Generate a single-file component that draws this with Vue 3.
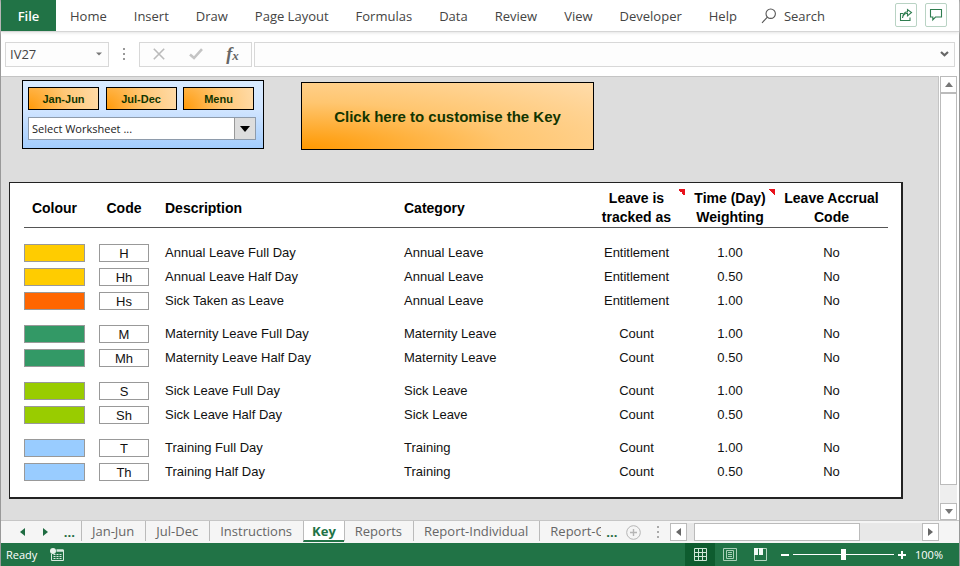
<script setup>
import { ref } from 'vue'

const ribbonTabs = ['Home', 'Insert', 'Draw', 'Page Layout', 'Formulas', 'Data', 'Review', 'View', 'Developer', 'Help']

const groups = [
  {
    name: 'annual',
    rows: [
      { swatch: 'gold', code: 'H', text: 'Annual Leave Full Day', category: 'Annual Leave', tracked: 'Entitlement', weight: '1.00' },
      { swatch: 'gold', code: 'Hh', text: 'Annual Leave Half Day', category: 'Annual Leave', tracked: 'Entitlement', weight: '0.50' },
      { swatch: 'orange', code: 'Hs', text: 'Sick Taken as Leave', category: 'Annual Leave', tracked: 'Entitlement', weight: '1.00' }
    ]
  },
  {
    name: 'maternity',
    rows: [
      { swatch: 'green', code: 'M', text: 'Maternity Leave Full Day', category: 'Maternity Leave', tracked: 'Count', weight: '1.00' },
      { swatch: 'green', code: 'Mh', text: 'Maternity Leave Half Day', category: 'Maternity Leave', tracked: 'Count', weight: '0.50' }
    ]
  },
  {
    name: 'sick',
    rows: [
      { swatch: 'lime', code: 'S', text: 'Sick Leave Full Day', category: 'Sick Leave', tracked: 'Count', weight: '1.00' },
      { swatch: 'lime', code: 'Sh', text: 'Sick Leave Half Day', category: 'Sick Leave', tracked: 'Count', weight: '0.50' }
    ]
  },
  {
    name: 'training',
    rows: [
      { swatch: 'blue', code: 'T', text: 'Training Full Day', category: 'Training', tracked: 'Count', weight: '1.00' },
      { swatch: 'blue', code: 'Th', text: 'Training Half Day', category: 'Training', tracked: 'Count', weight: '0.50' }
    ]
  }
]

const sheets = ['Jan-Jun', 'Jul-Dec', 'Instructions', 'Key', 'Reports', 'Report-Individual']
const activeSheet = ref('Key')
const cell = ref('IV27')
const formula = ref('')
const zoom = ref(50)
</script>

<template>
  <div class="window">
    <header class="ribbon">
      <button class="file" type="button">File</button>
      <nav class="ribbon-tabs">
        <button v-for="tab in ribbonTabs" :key="tab" type="button">{{ tab }}</button>
      </nav>
      <button class="search" type="button">
        <svg width="16" height="16" viewBox="0 0 16 16" fill="none" stroke="#555" stroke-width="1.1">
          <circle cx="9.7" cy="5.7" r="4.7" />
          <path d="M6.4 9.1 1 14.8" />
        </svg>
        Search
      </button>
      <div class="ribbon-actions">
        <button type="button" aria-label="Share">
          <svg width="14" height="14" viewBox="0 0 14 14" fill="none" stroke="#2f7d50" stroke-width="1.1">
            <path d="M4 5.500H1.500v7h9.500V9.500" />
            <path d="M3.500 10C4 7 5.500 5.500 8.500 5.300V7.800L12.500 4.500 8.500 1.500v2.200C5.500 4 3.700 6.500 3.500 10Z" />
          </svg>
        </button>
        <button type="button" aria-label="Comments">
          <svg width="14" height="14" viewBox="0 0 14 14" fill="none" stroke="#2f7d50" stroke-width="1.1">
            <path d="M1.500 1.500h11v7.500H6.500L3.800 11.800V9H1.500Z" />
          </svg>
        </button>
      </div>
    </header>

    <div class="formula-bar">
      <div class="name-box">
        <input v-model="cell" aria-label="Name box" />
        <button type="button" aria-label="Names">
          <svg width="6" height="4" viewBox="0 0 6 4"><path d="M0 .5h6L3 3.500Z" fill="#777" /></svg>
        </button>
      </div>
      <svg class="grip" width="4" height="12" viewBox="0 0 4 12" fill="#999">
        <rect x="1" y="0" width="2" height="2" /><rect x="1" y="5" width="2" height="2" /><rect x="1" y="10" width="2" height="2" />
      </svg>
      <div class="fx-box">
        <button type="button" aria-label="Cancel">
          <svg width="12" height="12" viewBox="0 0 12 12" fill="none" stroke="#bbb" stroke-width="1.600"><path d="M.8.8l10.400 10.400M11.200.8.8 11.200" /></svg>
        </button>
        <button type="button" aria-label="Enter">
          <svg width="14" height="12" viewBox="0 0 14 12" fill="none" stroke="#c4c4c4" stroke-width="2.600"><path d="M1 6.500 5 10 13 1.200" /></svg>
        </button>
        <button class="fx" type="button" aria-label="Insert function"><i>f</i><i class="fx-x">x</i></button>
      </div>
      <div class="formula">
        <input v-model="formula" aria-label="Formula" />
        <button type="button" aria-label="Expand formula bar">
          <svg width="9" height="6" viewBox="0 0 9 6" fill="none" stroke="#666" stroke-width="2.200"><path d="M1 1l3.500 3.300L8 1" /></svg>
        </button>
      </div>
    </div>

    <div class="workspace">
      <main class="sheet">
        <div class="toolbar">
          <section class="panel">
            <div class="panel-buttons">
              <button class="gold-button" type="button">Jan-Jun</button>
              <button class="gold-button" type="button">Jul-Dec</button>
              <button class="gold-button" type="button">Menu</button>
            </div>
            <div class="picker">
              <select aria-label="Worksheet">
                <option>Select Worksheet ...</option>
                <option v-for="name in sheets" :key="name">{{ name }}</option>
              </select>
              <span class="picker-arrow">
                <svg width="10" height="6" viewBox="0 0 10 6"><path d="M0 0h10L5 6Z" /></svg>
              </span>
            </div>
          </section>
          <button class="gold-button customise" type="button">Click here to customise the Key</button>
        </div>

        <div class="card">
          <table>
            <colgroup>
              <col class="col-colour" /><col class="col-code" /><col /><col class="col-category" />
              <col class="col-tracked" /><col class="col-time" /><col class="col-accrual" />
            </colgroup>
            <thead>
              <tr>
                <th class="colour">Colour</th>
                <th class="code">Code</th>
                <th class="left">Description</th>
                <th class="left">Category</th>
                <th class="noted">Leave is<br />tracked as</th>
                <th class="noted">Time (Day)<br />Weighting</th>
                <th>Leave Accrual<br />Code</th>
              </tr>
            </thead>
            <tbody v-for="group in groups" :key="group.name">
              <tr v-for="row in group.rows" :key="row.code">
                <td class="colour"><div class="swatch" :class="row.swatch"></div></td>
                <td class="code"><div class="code-box">{{ row.code }}</div></td>
                <td class="left">{{ row.text }}</td>
                <td class="left">{{ row.category }}</td>
                <td>{{ row.tracked }}</td>
                <td>{{ row.weight }}</td>
                <td>No</td>
              </tr>
            </tbody>
          </table>
        </div>
      </main>

      <div class="v-scroll">
        <button type="button" aria-label="Scroll up">
          <svg width="8" height="5" viewBox="0 0 8 5"><path d="M0 5h8L4 0Z" fill="#777" /></svg>
        </button>
        <div class="v-thumb"></div>
        <div class="v-track"></div>
        <button type="button" aria-label="Scroll down">
          <svg width="8" height="5" viewBox="0 0 8 5"><path d="M0 0h8L4 5Z" fill="#777" /></svg>
        </button>
      </div>
    </div>

    <div class="tab-strip">
      <div class="tab-nav">
        <button type="button" aria-label="Previous sheet">
          <svg width="5" height="8" viewBox="0 0 5 8"><path d="M5 0v8L0 4Z" fill="#1e6b41" /></svg>
        </button>
        <button type="button" aria-label="Next sheet">
          <svg width="5" height="8" viewBox="0 0 5 8"><path d="M0 0v8l5-4Z" fill="#1e6b41" /></svg>
        </button>
        <button class="more" type="button">...</button>
      </div>
      <nav class="sheet-tabs">
        <button
          v-for="name in sheets"
          :key="name"
          type="button"
          :class="{ active: name === activeSheet }"
          @click="activeSheet = name"
        >{{ name }}</button>
        <button class="clipped" type="button"><span>Report-G</span></button>
      </nav>
      <button class="more" type="button">...</button>
      <button class="add" type="button" aria-label="New sheet">
        <svg width="15" height="15" viewBox="0 0 15 15" fill="none" stroke="#b5b5b5">
          <circle cx="7.500" cy="7.500" r="6.800" /><path d="M7.500 4v7M4 7.500h7" stroke-width="1.400" />
        </svg>
      </button>
      <div class="h-area">
        <svg class="grip" width="4" height="12" viewBox="0 0 4 12" fill="#aaa">
          <rect x="1" y="0" width="2" height="2" /><rect x="1" y="5" width="2" height="2" /><rect x="1" y="10" width="2" height="2" />
        </svg>
        <div class="h-scroll">
          <button type="button" aria-label="Scroll left">
            <svg width="5" height="8" viewBox="0 0 5 8"><path d="M5 0v8L0 4Z" fill="#666" /></svg>
          </button>
          <div class="h-track"><div class="h-thumb"></div></div>
          <button type="button" aria-label="Scroll right">
            <svg width="5" height="8" viewBox="0 0 5 8"><path d="M0 0v8l5-4Z" fill="#666" /></svg>
          </button>
        </div>
      </div>
    </div>

    <footer class="status">
      <span class="ready">Ready</span>
      <svg width="14" height="13" viewBox="0 0 14 13" fill="none" stroke="#d9eadf">
        <circle cx="3" cy="3" r="3" fill="#e6f2ea" stroke="none" />
        <path d="M6.500 2.500h7" stroke-width="2.500" />
        <path d="M1.500 6v6.500h12V2M3.500 6.500h2M6.500 6.500h2M9.500 6.500h2M3.500 8.500h2M6.500 8.500h2M9.500 8.500h2M3.500 10.500h2M6.500 10.500h2M9.500 10.500h2" />
      </svg>
      <div class="views">
        <button class="selected" type="button" aria-label="Normal view">
          <svg width="13" height="13" viewBox="0 0 13 13" fill="none" stroke="#cfe6d7"><path d="M.5.5h12v12H.5ZM4.500 0v13M8.500 0v13M0 4.500h13M0 8.500h13" /></svg>
        </button>
        <button type="button" aria-label="Page layout view">
          <svg width="14" height="13" viewBox="0 0 14 13" fill="none" stroke="#a9cfb7"><path d="M.5.5h13v12H.5ZM3.500 2.500h7v8h-7ZM5 4.500h4M5 6.500h4M5 8.500h4" /></svg>
        </button>
        <button type="button" aria-label="Page break view">
          <svg width="13" height="13" viewBox="0 0 13 13" fill="none" stroke="#b5d6c1"><path d="M.5.5h12v12H.5Z" /><path d="M0 0h4v7H0ZM5 0h4v7H5Z" fill="#f2faf5" stroke="none" /></svg>
        </button>
      </div>
      <div class="zoom">
        <button type="button" aria-label="Zoom out"><svg width="8" height="8" viewBox="0 0 8 8"><path d="M0 3h8v2H0Z" fill="#fff" /></svg></button>
        <input v-model="zoom" type="range" min="0" max="100" aria-label="Zoom" />
        <button type="button" aria-label="Zoom in"><svg width="8" height="8" viewBox="0 0 8 8"><path d="M0 3h3V0h2v3h3v2H5v3H3V5H0Z" fill="#fff" /></svg></button>
      </div>
      <span class="percent">100%</span>
    </footer>
  </div>
</template>

<style>
body {
  margin: 0;
}
</style>

<style scoped>
* {
  box-sizing: border-box;
}

.window {
  display: flex;
  flex-direction: column;
  min-height: 100vh;
  background: #fff;
  border: solid #999;
  border-width: 0 1px;
  color: #444;
  font-family: "Open Sans", "Noto Sans", sans-serif;
  font-size: 13px;
}

button,
input,
select {
  margin: 0;
  padding: 0;
  border: 0;
  border-radius: 0;
  background: none;
  color: inherit;
  font: inherit;
  outline: none;
}

svg {
  display: block;
  flex: none;
}

/* Ribbon */
.ribbon {
  display: flex;
  height: 32px;
  border-bottom: 1px solid #d6d6d6;
  box-shadow: 0 1px 3px #e4e4e4;
}

.file {
  width: 55px;
  background: #217346;
  color: #fff;
  font-weight: 600;
}

.ribbon-tabs {
  display: flex;
  gap: 27px;
  padding-left: 14px;
}

.search {
  display: flex;
  align-items: center;
  gap: 7px;
  margin-left: 24px;
}

.ribbon-actions {
  display: flex;
  gap: 8px;
  margin-left: auto;
  padding: 3px 12px 4px 0;
}

.ribbon-actions button {
  display: grid;
  place-items: center;
  width: 22px;
  border: 1px solid #b9d3c4;
  border-radius: 2px;
}

/* Formula bar */
.formula-bar {
  display: flex;
  align-items: center;
  height: 44px;
  padding: 0 4px;
}

.name-box,
.fx-box,
.formula {
  display: flex;
  height: 25px;
  border: 1px solid #d8d8d8;
  background: #fdfdfd;
}

.name-box {
  width: 104px;
}

.name-box input {
  flex: 1;
  min-width: 0;
  padding-left: 4px;
}

.name-box button {
  display: grid;
  place-items: center;
  width: 18px;
}

.formula-bar .grip {
  margin: 0 13px;
}

.fx-box {
  width: 113px;
}

.fx-box button {
  display: grid;
  flex: 1;
  place-items: center;
}

.fx-box .fx {
  display: flex;
  align-items: center;
  justify-content: center;
  color: #666;
  font-family: "Liberation Serif", serif;
  font-size: 18px;
  font-weight: 700;
  line-height: 20px;
}

.fx .fx-x {
  padding-top: 3px;
  font-size: 13px;
}

.formula {
  flex: 1;
  margin-left: 2px;
}

.formula input {
  flex: 1;
  min-width: 0;
  padding: 0 6px;
}

.formula button {
  display: grid;
  place-items: center;
  width: 19px;
}

/* Sheet */
.workspace {
  display: flex;
  flex: 1;
}

.sheet {
  flex: 1;
  min-width: 0;
  padding: 3px 35px 20px 8px;
  border: solid #c4c4c4;
  border-width: 1px 1px 0 0;
  background: #ddd;
}

.toolbar {
  display: flex;
  align-items: flex-start;
  gap: 37px;
  padding-left: 13px;
  font-family: "Liberation Sans", Arial, sans-serif;
}

.panel {
  width: 242px;
  height: 69px;
  padding: 6px 7px 0 5px;
  border: 1px solid #000;
  background: linear-gradient(#d9ebff, #cfe4ff 45%, #a4cdfd);
}

.panel-buttons {
  display: flex;
  justify-content: space-between;
  padding-right: 2px;
}

.gold-button {
  width: 71px;
  height: 23px;
  border: 1px solid #000;
  background: radial-gradient(circle farthest-corner at 0 100%, #ff9a0a, #ffc878 55%, #ffdba8);
  color: #123500;
  font-size: 11px;
  font-weight: 700;
}

.gold-button.customise {
  width: 293px;
  height: 68px;
  margin-top: 2px;
  background: radial-gradient(ellipse farthest-corner at 0 100%, #ff9800, #ffc670 50%, #ffdcab);
  font-size: 15px;
}

.picker {
  position: relative;
  height: 23px;
  margin-top: 7px;
}

.picker select {
  width: 100%;
  height: 100%;
  padding: 0 24px 0 3px;
  border: 1px solid #8e9bab;
  background: #fff;
  color: #222;
  font-family: "Open Sans", "Noto Sans", sans-serif;
  font-size: 11px;
  appearance: none;
}

.picker-arrow {
  position: absolute;
  top: 1px;
  right: 1px;
  bottom: 1px;
  display: grid;
  place-items: center;
  width: 21px;
  border-left: 1px solid #999;
  background: #ddd;
  pointer-events: none;
}

.card {
  margin-top: 32px;
  padding: 6px 13px 13px 14px;
  border: solid #222;
  border-width: 1px 2px 2px 1px;
  background: #fff;
}

table {
  width: 100%;
  border-collapse: separate;
  border-spacing: 0;
  table-layout: fixed;
  color: #111;
  font-family: "Liberation Sans", Arial, sans-serif;
  font-size: 13px;
  line-height: 18px;
}

.col-colour { width: 75px; }
.col-code { width: 66px; }
.col-category { width: 184px; }
.col-tracked { width: 97px; }
.col-time { width: 90px; }
.col-accrual { width: 113px; }

th,
td {
  padding: 0;
  text-align: center;
  white-space: nowrap;
}

th {
  border-bottom: 1px solid #555;
  color: #000;
  font-size: 14px;
  line-height: 19px;
}

td {
  height: 24px;
  padding: 3px 0;
}

tbody tr:first-child td {
  padding-top: 12px;
}

thead + tbody tr:first-child td {
  padding-top: 16px;
}

tr .colour,
tbody tr:first-child .colour {
  padding-right: 14px;
}

tr .code,
tbody tr:first-child .code {
  padding-right: 16px;
}

.left {
  text-align: left;
}

.noted {
  background: linear-gradient(45deg, transparent 50%, #e8121c 50%) right top / 7px 7px no-repeat;
}

.swatch,
.code-box {
  height: 18px;
  border: 1px solid #999;
}

.code-box {
  line-height: 17px;
}

.gold { background: #fc0; }
.orange { background: #f60; }
.green { background: #396; }
.lime { background: #9c0; }
.blue { background: #9cf; }

/* Scroll bars */
.v-scroll {
  display: flex;
  flex-direction: column;
  width: 20px;
  padding-left: 1px;
}

.v-scroll button,
.v-thumb,
.h-scroll button,
.h-thumb {
  border: 1px solid #bbb;
  background: #fff;
}

.v-scroll button {
  display: grid;
  place-items: center;
  width: 17px;
  height: 17px;
}

.v-thumb {
  flex: 22;
  width: 17px;
}

.v-track {
  flex: 1;
  width: 17px;
  background: #eee;
}

/* Sheet tabs */
.tab-strip {
  display: flex;
  height: 23px;
  border-top: 1px solid #c6c6c6;
  background: #f5f5f5;
  color: #666;
}

.tab-nav {
  display: flex;
  width: 80px;
  padding-left: 10px;
}

.tab-nav button {
  display: grid;
  flex: 1;
  place-items: center;
}

.more {
  color: #1e6b41;
  font-weight: 700;
  line-height: 18px;
}

.sheet-tabs {
  display: flex;
  min-width: 0;
}

.sheet-tabs button {
  height: 20px;
  padding: 0 11px 0 10px;
  border-left: 1px solid #bbb;
  line-height: 16px;
}

.sheet-tabs .active {
  height: 21px;
  padding: 0 8px;
  border-bottom: 2px solid #217346;
  background: #fff;
  color: #217346;
  font-weight: 700;
}

.sheet-tabs .clipped {
  padding-right: 0;
}

.clipped span {
  display: block;
  width: 51px;
  overflow: hidden;
  white-space: nowrap;
}

.tab-strip > .more {
  margin-left: 5px;
}

.add {
  margin-left: 9px;
}

.h-area {
  display: flex;
  align-items: center;
  flex: none;
  gap: 10px;
  width: 303px;
  margin-left: auto;
  padding-right: 20px;
}

.h-scroll {
  display: flex;
  flex: 1;
  height: 18px;
}

.h-scroll button {
  display: grid;
  place-items: center;
  width: 17px;
}

.h-track {
  flex: 1;
  padding: 0 62px 0 7px;
  background: #e8e8e8;
}

.h-thumb {
  height: 18px;
}

/* Status bar */
.status {
  display: flex;
  align-items: center;
  height: 23px;
  padding: 0 16px 0 5px;
  background: #217346;
  color: #fff;
  font-size: 11px;
}

.ready {
  width: 44px;
}

.views {
  display: flex;
  margin-left: auto;
}

.views button {
  display: grid;
  place-items: center;
  width: 30px;
  height: 23px;
}

.views .selected {
  background: #0e5c2f;
}

.zoom {
  display: flex;
  align-items: center;
  gap: 4px;
  margin: 0 9px 0 6px;
}

.zoom input {
  width: 101px;
  height: 13px;
  background: linear-gradient(#fff, #fff) center / 100% 1px no-repeat;
  appearance: none;
}

.zoom input::-webkit-slider-thumb {
  width: 5px;
  height: 11px;
  background: #fff;
  border-radius: 0;
  appearance: none;
}
</style>
